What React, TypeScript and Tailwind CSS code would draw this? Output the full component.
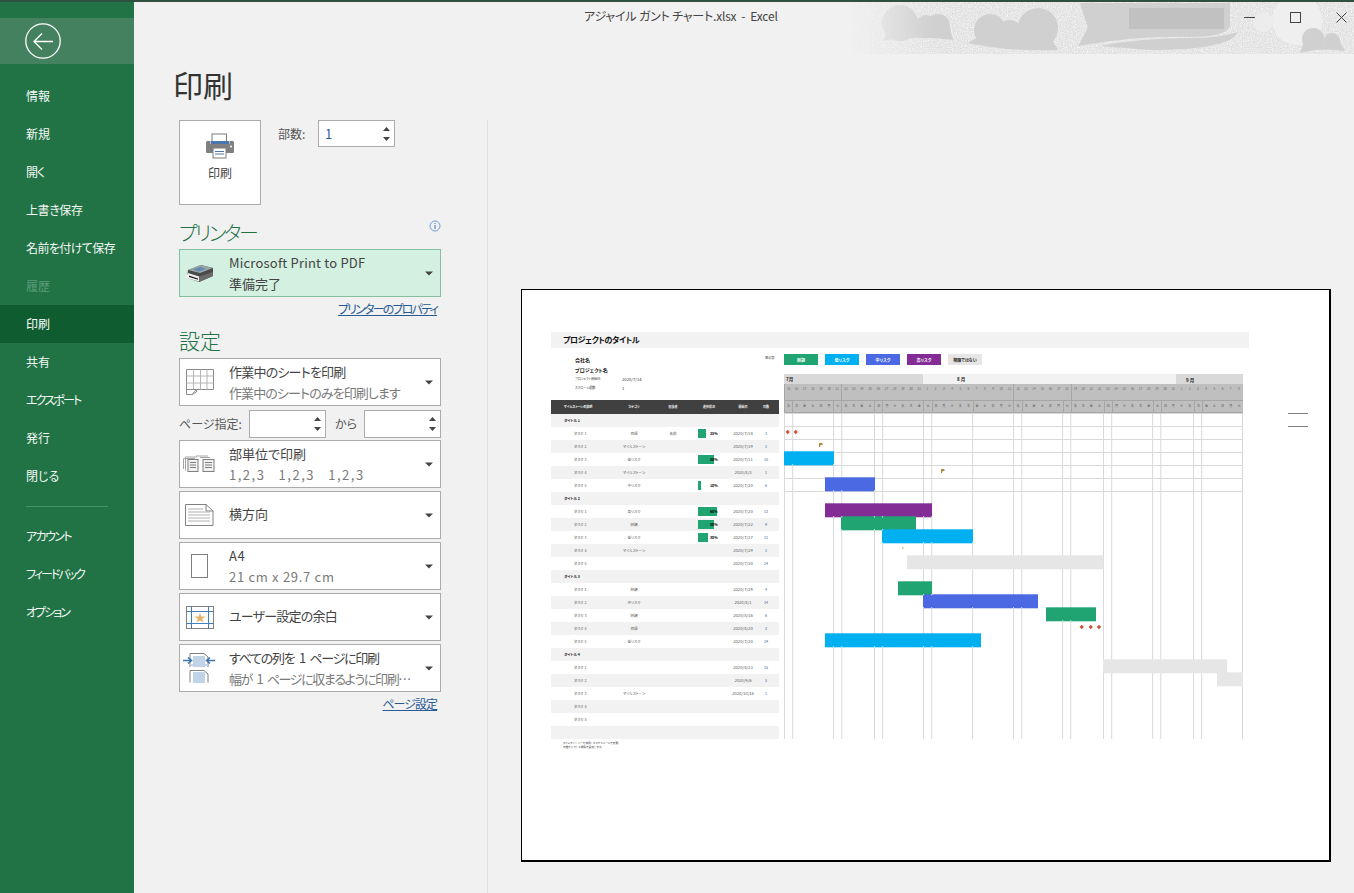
import React from "react";

const FONT = '"Noto Sans CJK JP", "Noto Sans", sans-serif';

const Caret = () => (
  <svg width="8" height="5" viewBox="0 0 8 5" className="shrink-0">
    <path d="M0 0.5H8L4 4.5Z" fill="#444" />
  </svg>
);

const Spin = () => (
  <div className="flex flex-col items-center gap-[6px]">
    <svg width="7" height="4" viewBox="0 0 7 4"><path d="M0 4L3.5 0L7 4Z" fill="#444" /></svg>
    <svg width="7" height="4" viewBox="0 0 7 4"><path d="M0 0H7L3.5 4Z" fill="#444" /></svg>
  </div>
);

const SpinBox = ({ value, className }: { value?: string; className: string }) => (
  <div className={`flex items-center justify-between bg-white border border-[#ababab] pl-[6px] pr-[4px] ${className}`}>
    <span className="text-[13px] text-[#2a5a9e]">{value}</span>
    <Spin />
  </div>
);

const PrinterBig = () => (
  <svg width="30" height="26" viewBox="0 0 30 26">
    <rect x="7" y="1" width="14.5" height="9" fill="#fff" stroke="#7a7a7a" />
    <path d="M2 8H5.5V11H24.5V8H28Q29 8 29 10V19Q29 20 28 20H2Q1 20 1 19V10Q1 8 2 8Z" fill="#808080" />
    <rect x="6" y="8" width="18" height="3" fill="#4a76b0" />
    <circle cx="26" cy="13.5" r="1" fill="#fff" />
    <rect x="8" y="15" width="13" height="10" fill="#fff" stroke="#7a7a7a" />
    <path d="M10 18.5H19M10 21H19" stroke="#4a76b0" />
  </svg>
);

const DeviceIcon = () => (
  <svg width="29" height="19" viewBox="0 0 29 19">
    <path d="M3 6L16 1L28 4V12L14 18L2 14Z" fill="#4a4a4a" />
    <path d="M3 6L16 1L28 4L15 9Z" fill="#9aa6a6" />
    <path d="M8 5.5L15 3L21 4.7L14 7.5Z" fill="#5f8ab0" />
    <path d="M3 9L14 12.5V17.5L1 14Z" fill="#f2f2f2" />
    <path d="M4 11.5L13 14.5V15.8L4 13Z" fill="#222" />
    <path d="M14 12.5L28 8V12L14 18Z" fill="#6a6a6a" />
  </svg>
);

const SheetIcon = () => (
  <svg width="28" height="26" viewBox="0 0 28 26" fill="none" stroke="#8a8a8a">
    <path d="M0.5 20.5V0.5H27.5V20.5H10.5L6 25.5H0.5Z" />
    <path d="M0.5 7H27.5M0.5 14H27.5M7.5 0.5V20M14.5 0.5V20.5M21 0.5V20.5" stroke="#b5b5b5" />
    <path d="M0.5 20.5H10.5V23L6 25.5" />
  </svg>
);

const CollateIcon = () => (
  <svg width="33" height="18" viewBox="0 0 33 18" fill="none" stroke="#7f7f7f">
    <path d="M0.5 14V3.5H12M2.5 15.5V2H14" stroke="#a5a5a5" />
    <rect x="5" y="4.5" width="10" height="12" fill="#f1f1f1" />
    <path d="M7 7.5H13M7 10H13M7 12.5H13" />
    <path d="M13 1H25M17 2.5H27" stroke="#a5a5a5" />
    <rect x="20" y="4.5" width="11" height="12" fill="#f1f1f1" />
    <path d="M22 7.5H29M22 10H29M22 12.5H29" />
  </svg>
);

const LandscapeIcon = () => (
  <svg width="29" height="22" viewBox="0 0 29 22" fill="none" stroke="#808080">
    <path d="M0.5 0.5H21L28 7V21.5H0.5Z" />
    <path d="M21 0.5V7H28" />
    <path d="M3 5H18M3 8H25M3 11H25M3 14H25M3 17H25" stroke="#b0b0b0" />
  </svg>
);

const PortraitIcon = () => (
  <svg width="17" height="24" viewBox="0 0 17 24" fill="none" stroke="#7f7f7f">
    <rect x="0.5" y="0.5" width="16" height="23" />
  </svg>
);

const MarginIcon = () => (
  <svg width="28" height="23" viewBox="0 0 28 23" fill="none">
    <rect x="0.5" y="0.5" width="27" height="22" stroke="#808080" />
    <path d="M5.5 0.5V22.5M22.5 0.5V22.5M0.5 5.5H27.5M0.5 17.5H27.5" stroke="#3f7fbf" />
    <path d="M14 7L15.4 10.6H19.4L16.2 12.9L17.4 16.6L14 14.4L10.6 16.6L11.8 12.9L8.6 10.6H12.6Z" fill="#e8b36b" />
  </svg>
);

const FitIcon = () => (
  <svg width="33" height="30" viewBox="0 0 33 30" fill="none">
    <path d="M7 14V0.5H21L25 4V14" stroke="#808080" />
    <rect x="10" y="3" width="12" height="11" fill="#c0d3e8" />
    <rect x="7" y="11" width="18" height="2" fill="#c0d3e8" />
    <path d="M7 29.5V17.5H21L25 21V29.5" stroke="#808080" />
    <rect x="10" y="19" width="12" height="11" fill="#c0d3e8" />
    <path d="M0 7.5H8M5 4.5L8.5 7.5L5 10.5M32 7.5H24M27 4.5L23.5 7.5L27 10.5" stroke="#3d74ad" strokeWidth="1.6" />
  </svg>
);

const Select = ({ icon, title, sub, tt = "", st = "", className = "" }: { icon: React.ReactNode; title: string; sub?: string; tt?: string; st?: string; className?: string }) => (
  <div className={`w-[262px] h-[48px] bg-white border border-[#ababab] flex items-center ${className}`}>
    <div className="w-[39px] mr-[10px] shrink-0 flex justify-center">{icon}</div>
    <div className={`flex-1 min-w-0 flex flex-col justify-center gap-[3px] text-[13px] leading-[18px] ${sub ? "" : "pb-[3px]"}`}>
      <div className={`text-[#444] whitespace-nowrap ${tt}`}>{title}</div>
      {sub && <div className={`text-[#7a7a7a] whitespace-pre ${st}`}>{sub}</div>}
    </div>
    <div className="w-[15px] shrink-0"><Caret /></div>
  </div>
);

const NAV: [string, string][] = [
  ["情報", ""],
  ["新規", ""],
  ["開く", "tracking-[-1px]"],
  ["上書き保存", "tracking-[-0.4px]"],
  ["名前を付けて保存", "tracking-[-0.6px]"],
];
const NAV2: [string, string][] = [
  ["共有", ""],
  ["エクスポート", "tracking-[-1.8px]"],
  ["発行", ""],
  ["閉じる", ""],
];
const NAV3: [string, string][] = [
  ["アカウント", "tracking-[-1.6px]"],
  ["フィードバック", "tracking-[-2px]"],
  ["オプション", "tracking-[-2px]"],
];

const NavItem = ({ label, className = "text-[#f4f8f5]" }: { label: string; className?: string }) => (
  <div className={`h-[38px] flex items-center pl-[26px] text-[12px] ${className}`}>{label}</div>
);

const TitleDecor = () => (
  <svg className="absolute right-0 top-0" width="504" height="52" viewBox="0 2 504 52">
    <defs>
      <linearGradient id="fade" x1="0" x2="1" y1="0" y2="0">
        <stop offset="0" stopColor="#000" />
        <stop offset="0.16" stopColor="#fff" />
        <stop offset="1" stopColor="#fff" />
      </linearGradient>
      <mask id="fm"><rect width="504" height="54" fill="url(#fade)" /></mask>
      <filter id="noise" x="0" y="0" width="100%" height="100%">
        <feTurbulence type="fractalNoise" baseFrequency="0.8" numOctaves="2" seed="4" />
        <feColorMatrix values="0 0 0 0 0.96  0 0 0 0 0.96  0 0 0 0 0.96  1.8 0 0 0 -0.6" />
      </filter>
    </defs>
    <g mask="url(#fm)">
      <rect width="504" height="54" fill="#dedede" />
      <rect width="504" height="54" filter="url(#noise)" />
      <g fill="#d0d0d0">
        <circle cx="50" cy="23" r="18" />
        <circle cx="76" cy="25" r="10" />
        <circle cx="88" cy="26" r="12" />
        <path d="M38 30L33 41Q60 35 103 40L100 28H45Z" />
        <circle cx="140" cy="30" r="16" />
        <circle cx="160" cy="32" r="12" />
        <circle cx="188" cy="28" r="20" />
        <path d="M118 43Q160 52 208 50L200 36L130 36Z" />
        <path d="M230 3H380V26Q376 37 340 37Q290 35 228 46L238 28Z" />
        <path d="M340 38Q370 38 388 32Q380 50 300 50L250 46Q290 38 340 38Z" />
      </g>
      <circle cx="447" cy="20" r="25" fill="#efefef" />
      <circle cx="413" cy="22" r="10" fill="#ececec" />
      <g fill="#d0d0d0">
        <circle cx="463" cy="39" r="11" />
        <circle cx="482" cy="41" r="8" />
        <path d="M450 53L454 42H490L495 51Q470 47 450 53Z" />
      </g>
    </g>
    <rect x="279" y="8" width="95" height="21" fill="#c1c1c1" />
  </svg>
);

/* ---- Preview sheet data ---- */
type Row = { l: string; g?: boolean; c?: string; o?: string; p?: number; d?: string; n?: string };
const RISK = { a: "目標", m: "マイルストーン", l: "低リスク", h: "高リスク", k: "中リスク", s: "順調" };
const ROWS: Row[] = [
  { l: "タイトル 1", g: true },
  { l: "タスク 1", c: RISK.a, o: "名前", p: 25, d: "2020/7/14", n: "3" },
  { l: "タスク 2", c: RISK.m, d: "2020/7/19", n: "1" },
  { l: "タスク 3", c: RISK.l, p: 50, d: "2020/7/11", n: "10" },
  { l: "タスク 4", c: RISK.m, d: "2020/8/3", n: "1" },
  { l: "タスク 5", c: RISK.k, p: 10, d: "2020/7/20", n: "6" },
  { l: "タイトル 2", g: true },
  { l: "タスク 1", c: RISK.h, p: 60, d: "2020/7/20", n: "13" },
  { l: "タスク 2", c: RISK.s, p: 50, d: "2020/7/22", n: "9" },
  { l: "タスク 3", c: RISK.l, p: 30, d: "2020/7/27", n: "11" },
  { l: "タスク 4", c: RISK.m, d: "2020/7/29", n: "1" },
  { l: "タスク 5", d: "2020/7/30", n: "24" },
  { l: "タイトル 3", g: true },
  { l: "タスク 1", c: RISK.s, d: "2020/7/29", n: "4" },
  { l: "タスク 2", c: RISK.k, d: "2020/8/1", n: "14" },
  { l: "タスク 3", c: RISK.s, d: "2020/8/16", n: "6" },
  { l: "タスク 4", c: RISK.a, d: "2020/8/20", n: "3" },
  { l: "タスク 5", c: RISK.l, d: "2020/7/20", n: "19" },
  { l: "タイトル 4", g: true },
  { l: "タスク 1", d: "2020/8/23", n: "15" },
  { l: "タスク 2", d: "2020/9/6", n: "5" },
  { l: "タスク 3", c: RISK.m, d: "2020/10/16", n: "1" },
  { l: "タスク 4" },
  { l: "タスク 5" },
  { l: "" },
];

const GRID = "grid grid-cols-[64px_38px_40px_33px_34px_12px_7px] items-center";

const SheetTable = () => (
  <div className="w-[228px]">
    <div className={`${GRID} h-[14px] bg-[#404040] text-white text-[3px] font-bold`}>
      <div className="pl-[13px] whitespace-nowrap">マイルストーンの説明</div>
      <div className="text-center">カテゴリ</div>
      <div className="text-center">担当者</div>
      <div className="pl-[10px] whitespace-nowrap">進捗状況</div>
      <div className="text-center">開始日</div>
      <div className="text-center">日数</div>
    </div>
    {ROWS.map((r, i) => (
      <div key={i} className={`${GRID} h-[13px] text-[3.6px] text-[#555] ${i % 2 === 0 ? "bg-[#f2f2f2]" : "bg-white"}`}>
        <div className={r.g ? "pl-[13px] font-bold text-[#222]" : "pl-[23px]"}>{r.l}</div>
        <div className="text-center whitespace-nowrap">{r.c}</div>
        <div className="text-center">{r.o}</div>
        <div className="relative h-[9px] ml-[5px]">
          {r.p !== undefined && (
            <>
              <div className="absolute left-0 top-0 h-[9px] bg-[#20a572]" style={{ width: `${r.p * 0.32}px` }} />
              <div className="absolute left-[12px] top-0 h-[9px] leading-[9px] font-bold text-black">{r.p}%</div>
            </>
          )}
        </div>
        <div className="text-center whitespace-nowrap text-[4.2px]">{r.d}</div>
        <div className="text-center text-[#3c5a9a]">{r.n}</div>
        <div />
      </div>
    ))}
  </div>
);

const COLW = 8.18;
const LINES = [0, 1, 6, 7, 11, 12, 17, 18, 23, 28, 29, 34, 35, 39, 40, 45, 46, 50, 51, 56];
const BARS: [number, number, number, string][] = [
  [0, 50, 3, "#00b0f0"],
  [41, 91, 5, "#4a69e2"],
  [41, 148, 7, "#842c96"],
  [57, 132, 8, "#20a572"],
  [98, 189, 9, "#00b0f0"],
  [123, 319.5, 11, "#e6e6e6"],
  [114, 148, 13, "#20a572"],
  [139, 254, 14, "#4a69e2"],
  [262, 312, 15, "#20a572"],
  [41, 197, 17, "#00b0f0"],
  [319, 443, 19, "#e6e6e6"],
  [433, 459, 20, "#e6e6e6"],
];

const Diamond = ({ x, y }: { x: number; y: number }) => (
  <path d={`M${x} ${y - 2.2}L${x + 2.2} ${y}L${x} ${y + 2.2}L${x - 2.2} ${y}Z`} fill="#c8573a" />
);
const Flag = ({ x, y }: { x: number; y: number }) => (
  <path d={`M${x} ${y - 2}H${x + 3}L${x + 4} ${y - 0.5}L${x + 1.2} ${y + 0.5}V${y + 2}H${x}Z`} fill="#b08a3c" />
);

const GanttBody = () => (
  <svg width="459" height="326" viewBox="0 0 459 326" className="block">
    {[0, 1, 2, 3, 4, 5, 6].map((i) => (
      <rect key={i} x="0" y={i * 13} width="459" height="1" fill="#d9d9d9" />
    ))}
    {LINES.map((c) => (
      <rect key={c} x={Math.min(c * COLW, 458)} y="0" width="1" height="326" fill="#d9d9d9" />
    ))}
    {BARS.map(([a, b, r, col], i) => (
      <rect key={i} x={a} y={r * 13 - 0.7} width={b - a} height="14" fill={col} />
    ))}
    {BARS.filter((b) => b[3] !== "#e6e6e6").map(([a, b, r], i) =>
      LINES.filter((c) => c * COLW > a && c * COLW < b).map((c) => (
        <rect key={`${i}-${c}`} x={c * COLW} y={r * 13 + 12.3} width="1" height="1" fill="#fff" />
      ))
    )}
    <Diamond x={3.7} y={19} />
    <Diamond x={11.7} y={19} />
    <Flag x={35} y={32} />
    <Flag x={157} y={58} />
    <path d="M118 133.5L120 135.5H118.5Z" fill="#b08a3c" />
    <Diamond x={297.7} y={214} />
    <Diamond x={306.7} y={214} />
    <Diamond x={315} y={214} />
  </svg>
);

const DAYS = [
  ...Array.from({ length: 17 }, (_, i) => i + 15),
  ...Array.from({ length: 31 }, (_, i) => i + 1),
  ...Array.from({ length: 8 }, (_, i) => i + 1),
];
const WEEK = ["日", "月", "火", "水", "木", "金", "土"];
const LEGEND: [string, string, string][] = [
  ["順調", "bg-[#20a572]", "text-white"],
  ["低リスク", "bg-[#00b0f0]", "text-white"],
  ["中リスク", "bg-[#4a69e2]", "text-white"],
  ["高リスク", "bg-[#842c96]", "text-white"],
  ["期限ではない", "bg-[#e6e6e6]", "text-[#222]"],
];

const GanttHead = () => (
  <div className="w-[459px]">
    <div className="h-[26px] flex gap-[7px] pt-[6px]">
      {LEGEND.map(([t, bg, fg]) => (
        <div key={t} className={`w-[34px] h-[11px] ${bg} ${fg} text-[4px] font-bold flex items-center justify-center whitespace-nowrap`}>{t}</div>
      ))}
    </div>
    <div className="h-[10px] flex text-[4.5px] font-bold text-[#222]">
      <div className="w-[139px] bg-[#d9d9d9] pl-[2px] flex items-center">7月</div>
      <div className="w-[253px] bg-[#f2f2f2] pl-[34px] flex items-center">8 月</div>
      <div className="w-[67px] bg-[#d9d9d9] pl-[10px] flex items-end">9 月</div>
    </div>
    <div className="h-[16px] grid grid-cols-[repeat(56,1fr)] bg-[#bfbfbf] text-[3px] text-[#666]">
      {DAYS.map((d, i) => (
        <div key={i} className={`text-center pt-[3px] ${i === 0 || i === 7 || i === 28 || i === 35 ? "border-l border-[#a6a6a6]" : ""}`}>{d}</div>
      ))}
    </div>
    <div className="h-[13px] grid grid-cols-[repeat(56,1fr)] bg-[#bfbfbf] border-t border-b border-[#a6a6a6] text-[3px] text-[#555]">
      {DAYS.map((_, i) => (
        <div key={i} className={`flex items-center justify-center ${LINES.includes(i) ? "border-l border-[#a6a6a6]" : ""}`}>{WEEK[(i + 3) % 7]}</div>
      ))}
    </div>
    <GanttBody />
  </div>
);

const Sheet = () => (
  <div className="w-[698px] shrink-0">
    <div className="h-[16px] bg-[#f2f2f2] pl-[12px] flex items-center text-[8px] tracking-[-0.45px] font-bold text-[#111] whitespace-nowrap">プロジェクトのタイトル</div>
    <div className="flex gap-[5px]">
      <div className="w-[228px]">
        <div className="h-[52px] relative pl-[24px] pt-[7px] text-[#333]">
          <div className="h-[10px] leading-[10px] text-[5px] font-bold text-[#111]">会社名</div>
          <div className="h-[10px] leading-[10px] text-[5px] font-bold text-[#111]">プロジェクト名</div>
          <div className="h-[9px] leading-[9px] text-[3px] flex"><span className="w-[47px]">プロジェクト開始日:</span><span className="text-[4.2px]">2020/7/14</span></div>
          <div className="h-[9px] leading-[9px] text-[3px] flex"><span className="w-[47px]">スクロール週数:</span><span className="text-[4.2px]">1</span></div>
          <div className="absolute right-[4px] top-[8px] text-[3px] text-[#555]">難易度:</div>
        </div>
        <SheetTable />
      </div>
      <GanttHead />
    </div>
    <div className="pl-[12px] pt-[2px] text-[2.7px] leading-[4px] text-[#444]">
      <div>タイムライン バーを使用してスケジュールを変更、</div>
      <div>日数を入力して期間を設定します。</div>
    </div>
  </div>
);

export default function App() {
  return (
    <div
      className="w-[1354px] h-[893px] overflow-hidden flex flex-col bg-[#f1f1f1] [font-feature-settings:'palt'] antialiased"
      style={{ fontFamily: FONT }}
    >
      <div className="h-[2px] shrink-0 bg-[#2f5040]" />
      <div className="flex-1 flex min-h-0">
        <aside className="w-[134px] shrink-0 bg-[#217346] pt-[16px]">
          <div className="h-[46px] bg-[#44815f] flex items-center pl-[25px]">
            <svg width="36" height="36" viewBox="0 0 36 36" fill="none" stroke="#fff">
              <circle cx="18" cy="18" r="17.2" strokeWidth="1.3" />
              <path d="M28 18.5H9M17 10.5L9 18.5L17 26.5" strokeWidth="1.3" />
            </svg>
          </div>
          <div className="h-[13px]" />
          {NAV.map(([n, t]) => <NavItem key={n} label={n} className={`text-[#f4f8f5] ${t}`} />)}
          <NavItem label="履歴" className="text-[#5c9c79]" />
          <NavItem label="印刷" className="text-white bg-[#0f5c30]" />
          {NAV2.map(([n, t]) => <NavItem key={n} label={n} className={`text-[#f4f8f5] ${t}`} />)}
          <div className="h-px bg-[#4a9068] ml-[26px] w-[82px] mt-[11px] mb-[10px]" />
          {NAV3.map(([n, t]) => <NavItem key={n} label={n} className={`text-[#f4f8f5] ${t}`} />)}
        </aside>

        <main className="flex-1 min-w-0 flex flex-col">
          <header className="relative h-[52px] shrink-0 flex pl-[450px] pt-[5px] text-[12px] text-[#444]">
            <TitleDecor />
            <span className="relative whitespace-pre tracking-[-0.2px]">アジャイル ガント チャート.xlsx  -  Excel</span>
            <div className="absolute right-0 top-0 h-[30px] flex items-center text-[#444]">
              <div className="w-[46px] flex justify-center">
                <svg width="11" height="11" viewBox="0 0 11 11"><path d="M0 5.5H11" stroke="#444" /></svg>
              </div>
              <div className="w-[46px] flex justify-center">
                <svg width="11" height="11" viewBox="0 0 11 11" fill="none"><rect x="0.5" y="0.5" width="10" height="10" stroke="#444" /></svg>
              </div>
              <div className="w-[36px] flex justify-end pr-[7px]">
                <svg width="11" height="11" viewBox="0 0 11 11"><path d="M0.5 0.5L10.5 10.5M10.5 0.5L0.5 10.5" stroke="#444" /></svg>
              </div>
            </div>
          </header>

          <div className="h-[66px] shrink-0 pl-[39px] pt-[10px] text-[30px] leading-[40px] text-[#333]">印刷</div>

          <div className="flex-1 min-h-0 flex">
            <section className="w-[354px] shrink-0 border-r border-[#e1e1e1] pl-[45px]">
              <div className="h-[85px] flex gap-[17px]">
                <div className="w-[82px] h-[85px] bg-white border border-[#ababab] flex flex-col items-center pt-[12px]">
                  <PrinterBig />
                  <div className="mt-[5px] text-[12px] text-[#444]">印刷</div>
                </div>
                <div className="h-[27px] flex items-center gap-[9px]">
                  <span className="text-[12px] text-[#555] w-[31px] whitespace-nowrap">部数:</span>
                  <SpinBox value="1" className="w-[77px] h-[27px]" />
                </div>
              </div>

              <div className="w-[262px] h-[44px] flex items-end justify-between">
                <h2 className="mb-[3px] text-[20px] leading-[27px] font-light tracking-[-2.5px] text-[#217346]">プリンター</h2>
                <svg width="12" height="12" viewBox="0 0 12 12" className="mb-[17px]" fill="none">
                  <circle cx="6" cy="6" r="5" stroke="#6f9fd8" />
                  <path d="M6 5V9M6 3V4" stroke="#3f6fae" />
                </svg>
              </div>

              <div className="w-[262px] h-[48px] bg-[#d3f0e0] border border-[#86bfa0] flex items-center">
                <div className="w-[39px] mr-[10px] shrink-0 flex justify-center"><DeviceIcon /></div>
                <div className="flex-1 flex flex-col gap-[3px] text-[13px] leading-[18px] text-[#444]">
                  <div className="whitespace-nowrap tracking-[0.2px]">Microsoft Print to PDF</div>
                  <div>準備完了</div>
                </div>
                <div className="w-[15px]"><Caret /></div>
              </div>

              <div className="w-[258px] h-[24px] flex items-center justify-end text-[12px] tracking-[-1.8px] text-[#2a5a94] underline">プリンターのプロパティ</div>

              <h2 className="h-[37px] pt-[6px] text-[21px] leading-[27px] font-light text-[#217346]">設定</h2>

              <Select icon={<SheetIcon />} title="作業中のシートを印刷" tt="tracking-[-0.8px]" sub="作業中のシートのみを印刷します" st="tracking-[-0.9px]" />

              <div className="w-[262px] h-[28px] mt-[4px] flex items-center text-[12px] text-[#555]">
                <span className="w-[70px] whitespace-nowrap">ページ指定:</span>
                <SpinBox className="w-[77px] h-[28px]" />
                <span className="w-[38px] pl-[9px]">から</span>
                <SpinBox className="w-[77px] h-[28px]" />
              </div>

              <Select icon={<CollateIcon />} title="部単位で印刷" sub="1,2,3   1,2,3   1,2,3" st="tracking-[1.5px]" className="mt-[2px]" />
              <Select icon={<LandscapeIcon />} title="横方向" className="mt-[3px]" />
              <Select icon={<PortraitIcon />} title="A4" tt="tracking-[0.5px]" sub="21 cm x 29.7 cm" st="tracking-[0.7px]" className="mt-[3px]" />
              <Select icon={<MarginIcon />} title="ユーザー設定の余白" tt="tracking-[-0.8px]" className="mt-[3px]" />
              <Select icon={<FitIcon />} title="すべての列を 1 ページに印刷" tt="tracking-[-1.3px] [word-spacing:3px]" sub="幅が 1 ページに収まるように印刷…" st="tracking-[-1.4px] [word-spacing:3px]" className="mt-[3px]" />

              <div className="w-[258px] h-[24px] flex items-center justify-end text-[12px] tracking-[-1px] text-[#2a5a94] underline">ページ設定</div>
            </section>

            <section className="flex-1 min-w-0 pl-[33px] pt-[169px]">
              <div className="w-[810px] h-[573px] bg-white border-t border-l border-r-2 border-b-2 border-black pl-[29px] pt-[42px] flex">
                <Sheet />
                <div className="ml-[39px] mt-[81px] w-[20px] flex flex-col gap-[12px]">
                  <div className="h-px bg-[#808080]" />
                  <div className="h-px bg-[#808080]" />
                </div>
              </div>
            </section>
          </div>
        </main>
      </div>
    </div>
  );
}
